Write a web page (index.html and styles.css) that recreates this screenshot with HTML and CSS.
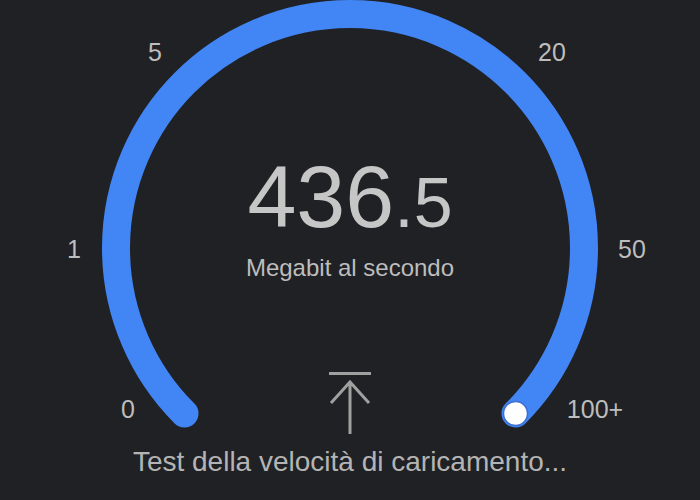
FILE: index.html
```html
<!DOCTYPE html>
<html lang="it">
<head>
    <meta charset="UTF-8">
    <meta name="viewport" content="width=device-width, initial-scale=1.0">
    <title>Test velocità</title>
    <link rel="stylesheet" href="styles.css">
</head>
<body>
    <main class="gauge">
        <svg class="dial" width="700" height="500" viewBox="0 0 700 500">
            <path d="M 184.5 413.5 A 234 234 0 1 1 515.5 413.5" fill="none" stroke="#4285f4" stroke-width="28" stroke-linecap="round"/>
            <circle cx="515.5" cy="413.5" r="12" fill="#ffffff" stroke="#3b6fd1" stroke-width="1.5"/>
        </svg>

        <span class="tick" style="left: 128px; top: 409px;">0</span>
        <span class="tick" style="left: 74px; top: 249px;">1</span>
        <span class="tick" style="left: 155px; top: 52px;">5</span>
        <span class="tick" style="left: 552px; top: 52px;">20</span>
        <span class="tick" style="left: 632px; top: 249px;">50</span>
        <span class="tick" style="left: 595px; top: 409px;">100+</span>

        <div class="readout">
            <span class="value">436<span class="decimal">.5</span></span>
            <span class="unit">Megabit al secondo</span>
        </div>

        <svg class="upload-icon" width="44" height="64" viewBox="0 0 44 64">
            <path d="M1 3.5 H43" stroke="#a0a0a0" stroke-width="3" fill="none"/>
            <path d="M22 12 V64 M3 33 L22 12 L41 33" stroke="#a0a0a0" stroke-width="3" fill="none"/>
        </svg>

        <p class="status">Test della velocità di caricamento...</p>
    </main>
</body>
</html>
```

FILE: styles.css
```css
html, body {
    margin: 0;
    padding: 0;
    background-color: #202124;
}
body {
    font-family: "Liberation Sans", Arial, sans-serif;
    color: #bdbdbd;
    overflow: hidden;
}
.gauge {
    position: relative;
    width: 700px;
    height: 500px;
    display: flex;
    flex-direction: column;
    align-items: center;
    box-sizing: border-box;
    padding-top: 153px;
}
.dial {
    position: absolute;
    left: 0;
    top: 0;
}
.tick {
    position: absolute;
    transform: translate(-50%, -50%);
    font-size: 25px;
    line-height: 1;
    color: #bdbdbd;
}
.readout {
    position: relative;
    display: flex;
    flex-direction: column;
    align-items: center;
}
.value {
    font-size: 88px;
    line-height: 1;
    color: #c6c6c6;
}
.value .decimal {
    font-size: 70px;
}
.unit {
    margin-top: 15px;
    font-size: 24px;
    line-height: 24px;
    color: #bdbdbd;
}
.upload-icon {
    position: relative;
    margin-top: 90px;
    display: block;
}
.status {
    margin: 14px 0 0;
    font-size: 28px;
    line-height: 28px;
    color: #b4b4b4;
}
```
